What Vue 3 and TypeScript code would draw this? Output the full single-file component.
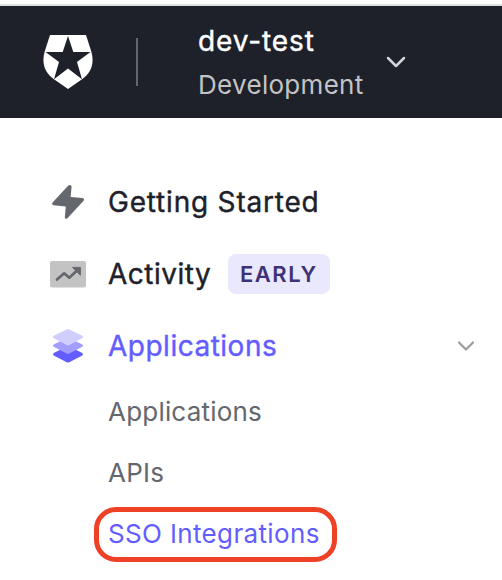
<script setup lang="ts">
interface SubItem {
  label: string
  active?: boolean
}

const tenant = { name: 'dev-test', environment: 'Development' }

const subItems: SubItem[] = [
  { label: 'Applications' },
  { label: 'APIs' },
  { label: 'SSO Integrations', active: true },
]
</script>

<template>
  <div class="page">
    <header class="topbar">
      <svg class="logo" viewBox="0 0 50 54" width="50" height="54">
        <path fill="#fff" d="M7 0H43L48.3 16.5C51.6 28 48.5 37.5 39 44.3L25 54L11 44.3C1.5 37.5-1.6 28 1.7 16.5Z" />
        <path fill="#1e2129" d="M25 1L30.3 17H47.4L34 27L39 44.2L25 33.5L11 44.2L16 27L2.6 17H19.7Z" />
      </svg>
      <span class="divider"></span>
      <div class="tenant">
        <span class="tenant-name">{{ tenant.name }}</span>
        <span class="tenant-env">{{ tenant.environment }}</span>
      </div>
      <svg class="tenant-chevron" viewBox="0 0 20 12" width="20" height="12">
        <path d="M2 2L10 10L18 2" fill="none" stroke="#d3d4d7" stroke-width="2.5" stroke-linecap="round" stroke-linejoin="round" />
      </svg>
    </header>

    <nav class="nav">
      <a class="item">
        <svg class="icon" viewBox="0 0 36 36" width="36" height="36">
          <path d="M18.3 1.6L2.6 18.6Q1.2 20.8 3.6 21.2L15.8 22.4L14.8 33.4Q15.2 35.8 17.4 34.2L33.6 16.7Q34.8 14.6 32.6 14L20.6 13L21.6 2.4Q20.6 0 18.3 1.6Z" fill="#65676e" />
        </svg>
        <span class="label started">Getting Started</span>
      </a>
      <a class="item">
        <svg class="icon" viewBox="0 0 36 36" width="36" height="36">
          <rect x="0" y="5" width="36" height="26.5" rx="2" fill="#c3c3c4" />
          <path d="M7 23.5L14.2 17.3L19.3 21.8L27.8 13.7" fill="none" stroke="#65676e" stroke-width="2.7" stroke-linecap="round" stroke-linejoin="round" />
          <path d="M22.5 11.4H30.4V19.2Z" fill="#65676e" stroke="#65676e" stroke-width="1" stroke-linejoin="round" />
        </svg>
        <span class="label activity">Activity</span>
        <span class="badge">EARLY</span>
      </a>
      <a class="item current">
        <svg class="icon" viewBox="0 0 36 36" width="36" height="36">
          <path d="M16.7 18.6Q18 18 19.3 18.6L32.3 25Q33.8 26.2 32.3 27.4L19.3 34.2Q18 34.8 16.7 34.2L3.7 27.4Q2.2 26.2 3.7 25Z" fill="#635dff" />
          <path d="M16.7 10Q18 9.4 19.3 10L32.3 16.4Q33.8 17.6 32.3 18.8L19.3 25.6Q18 26.2 16.7 25.6L3.7 18.8Q2.2 17.6 3.7 16.4Z" fill="#a29eff" />
          <path d="M16.7 1.4Q18 .8 19.3 1.4L32.3 7.8Q33.8 9 32.3 10.2L19.3 16.9Q18 17.5 16.7 16.9L3.7 10.2Q2.2 9 3.7 7.8Z" fill="#d0ceff" />
        </svg>
        <span class="label">Applications</span>
        <svg class="chevron" viewBox="0 0 18 12" width="18" height="12">
          <path d="M2 2.5L9 9.5L16 2.5" fill="none" stroke="#9b9ca0" stroke-width="2.2" stroke-linecap="round" stroke-linejoin="round" />
        </svg>
      </a>
      <div class="subnav">
        <a v-for="sub in subItems" :key="sub.label" class="sub" :class="{ highlighted: sub.active }">{{ sub.label }}</a>
      </div>
    </nav>
  </div>
</template>

<style>
body {
  background: #fff;
}
</style>

<style scoped>
.page {
  box-sizing: border-box;
  width: 502px;
  height: 580px;
  padding-top: 4px;
  overflow: hidden;
  background: #fff;
  font-family: Inter, "Liberation Sans", sans-serif;
}
.topbar {
  box-sizing: border-box;
  display: flex;
  align-items: center;
  height: 114px;
  padding-left: 43px;
  border-top: 2px solid #dce0e0;
  background: #1e2129;
}
.logo {
  display: block;
}
.divider {
  width: 2px;
  height: 48px;
  margin-left: 43px;
  background: #65676e;
}
.tenant {
  display: flex;
  flex-direction: column;
  width: 188px;
  margin-left: 60px;
  padding-top: 2px;
  white-space: nowrap;
}
.tenant-name {
  line-height: 44px;
  font-size: 28px;
  font-weight: 400;
  -webkit-text-stroke: 0.4px currentColor;
  letter-spacing: 0.9px;
  color: #fff;
}
.tenant-env {
  line-height: 44px;
  font-size: 26px;
  letter-spacing: 0.3px;
  color: #c3c3c6;
}
.nav {
  padding: 48px 27px 0 50px;
}
.item {
  display: flex;
  align-items: center;
  height: 72px;
  color: #1e2129;
}
.icon {
  flex: none;
  margin-right: 22px;
}
.label {
  font-size: 28px;
  font-weight: 400;
  -webkit-text-stroke: 0.4px currentColor;
  line-height: 40px;
  letter-spacing: 0.5px;
  white-space: nowrap;
}
.started {
  letter-spacing: 0.8px;
}
.activity {
  width: 104px;
}
.current {
  color: #635dff;
}
.badge {
  box-sizing: border-box;
  width: 102px;
  height: 40px;
  margin-left: 16px;
  padding-left: 12px;
  border-radius: 8px;
  background: #eae8fd;
  color: #3c3275;
  font-size: 22px;
  font-weight: 600;
  line-height: 40px;
  letter-spacing: 1.5px;
}
.chevron {
  margin-left: auto;
}
.subnav {
  display: flex;
  flex-direction: column;
  align-items: flex-start;
  gap: 6px;
  padding: 3px 0 0 44px;
}
.sub {
  box-sizing: border-box;
  height: 55px;
  padding: 0 9px;
  border: 5px solid transparent;
  color: #65676e;
  font-size: 26px;
  line-height: 44px;
  letter-spacing: 0.2px;
  white-space: nowrap;
}
.highlighted {
  width: 243px;
  border-color: #ee4125;
  border-radius: 22px;
  color: #635dff;
  letter-spacing: 0.35px;
}
</style>
